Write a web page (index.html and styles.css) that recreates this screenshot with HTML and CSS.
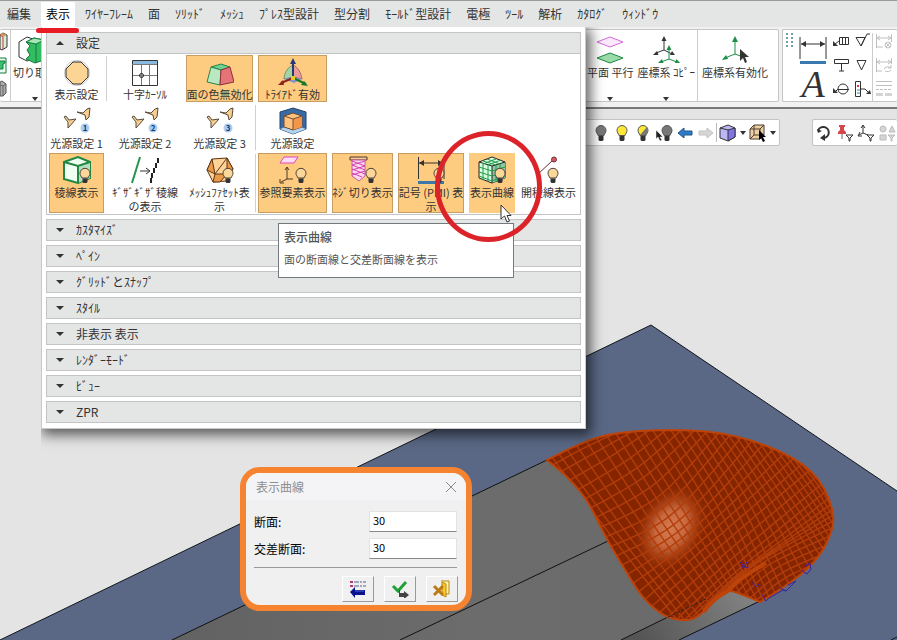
FILE: index.html
```html
<!DOCTYPE html>
<html lang="ja">
<head>
<meta charset="utf-8">
<title>表示曲線</title>
<link rel="stylesheet" href="styles.css">
</head>
<body>
<svg class="defs" aria-hidden="true">
  <symbol id="bulb" viewBox="0 0 12 16">
    <path d="M6 .8a5 5 0 0 0-5 5c0 2 1.300 3 2 4.700h6c.7-1.700 2-2.700 2-4.700a5 5 0 0 0-5-5z" fill="#fbd79a" stroke="#4a4038"/>
    <path d="M3.500 11h5v3.500l-1 1h-3l-1-1z" fill="#333"/>
  </symbol>
  <symbol id="lamp" viewBox="0 0 14 18">
    <path d="M7 1.500a5 5 0 0 0-5 5c0 2 1.500 3 2 5h6c.5-2 2-3 2-5a5 5 0 0 0-5-5z" fill="currentColor" stroke="#555"/>
    <path d="M4.500 12h5v4l-1 1h-3l-1-1z" fill="#333"/>
  </symbol>
  <symbol id="lights" viewBox="0 0 28 28">
    <g fill="#f8cf91" stroke="#564a3b" stroke-linejoin="round">
      <path d="M1 10l2-1 3 4 7-1-8 9 0-6z"/>
      <path d="M14 5l6 1 4-4 3-1-1 9-3 3-1-5z"/>
    </g>
    <circle cx="22" cy="21" r="4.500" fill="#a9cdf5"/>
  </symbol>
  <symbol id="arrow" viewBox="0 0 12 19">
    <path d="M1 1v14l3.500-3 2.500 6 2.500-1-2.500-5.500h4z" fill="#fff" stroke="#333"/>
  </symbol>
</svg>

<div class="app">
  <nav class="menu">
    <a href="#">編集</a>
    <a href="#" class="current">表示</a>
    <a href="#">ﾜｲﾔｰﾌﾚｰﾑ</a>
    <a href="#">面</a>
    <a href="#">ｿﾘｯﾄﾞ</a>
    <a href="#">ﾒｯｼｭ</a>
    <a href="#">ﾌﾟﾚｽ型設計</a>
    <a href="#">型分割</a>
    <a href="#">ﾓｰﾙﾄﾞ型設計</a>
    <a href="#">電極</a>
    <a href="#">ﾂｰﾙ</a>
    <a href="#">解析</a>
    <a href="#">ｶﾀﾛｸﾞ</a>
    <a href="#">ｳｨﾝﾄﾞｳ</a>
  </nav>

  <div class="ribbon">
    <div class="group main-group">
      <div class="edge-icons">
        <svg width="8" height="20" viewBox="0 0 8 20"><path d="M0 3l3-2 4 2v12l-5 3-2-1z" fill="#d9efdc" stroke="#333"/><path d="M0 3l3 2v12" fill="none" stroke="#c33"/><path d="M0 2l3-1 4 2-4 2z" fill="#c99963"/></svg>
        <svg width="8" height="18" viewBox="0 0 8 18"><path d="M0 1h6v15H0" fill="#eafaf0" stroke="#187a3c"/><path d="M0 4h5v2l-2 1v5H0" fill="#38c070" stroke="#187a3c"/></svg>
        <svg width="8" height="18" viewBox="0 0 8 18"><path d="M0 2l2-1 4 3v9l-3 3H0z" fill="#aaa" stroke="#555"/><path d="M0 5l3 1 3-2M3 6v9" fill="none" stroke="#666"/></svg>
      </div>
      <button class="tool cut">
        <svg width="34" height="28" viewBox="0 0 34 28"><path d="M1 6l8-5 6 2-3 6 3 4-3 5 3 5-6 2-8-4z" fill="#fff" stroke="#333"/><path d="M8 6l8-4 10 2v20l-9 3-9-4 4-4-3-5 3-4z" fill="#32bd62" stroke="#187a3c"/><path d="M8 6l8-4 10 2-8 4z" fill="#a5e6b7" stroke="#187a3c"/><path d="M18 8v19" stroke="#187a3c"/></svg>
        <span>切り取り</span><i class="caret"></i>
      </button>
      <div class="main-right">
        <button class="tool">
          <svg width="28" height="28" viewBox="0 0 28 28"><path d="M1 6l13-5 13 5-13 5z" fill="#fbe9fb" stroke="#d46ad8"/><path d="M1 22l13-5 13 5-13 5z" fill="#9adba9" stroke="#1f8a45"/></svg>
          <span>平面 平行</span><i class="caret"></i>
        </button>
        <button class="tool">
          <svg width="28" height="28" viewBox="0 0 28 28" fill="none"><path d="M12 4v10L4 17M12 14l8 4" stroke="#333"/><path d="M12 0l-2.500 5h5zM1 19l4-4 1.500 4zM23 19l-5 0 2-4z" fill="#333"/><path d="M17 13v10l-8 3M17 23l8 3" stroke="#1b8f46"/><path d="M17 9l-2.500 5h5zM6 27l4-4 1.500 4zM28 27l-5 0 1.500-4z" fill="#1b8f46"/></svg>
          <span>座標系 ｺﾋﾟｰ</span><i class="caret"></i>
        </button>
        <button class="tool last">
          <svg width="28" height="28" viewBox="0 0 28 28" fill="none"><path d="M14 4v14L4 22M14 18l8 3" stroke="#1b8f46"/><path d="M14 0l-3 6h6zM1 24l4-5 2 4z" fill="#1b8f46"/><path d="M19 13v12l3-3 2 5 2-1-2-5h4z" fill="#333"/></svg>
          <span>座標系有効化</span>
        </button>
      </div>
    </div>
    <div class="group note-group">
      <svg class="grip" width="8" height="16" viewBox="0 0 8 16" fill="#6e9dae"><path d="M0 0h2v2H0zM5 0h2v2H5zM0 4h2v2H0zM5 4h2v2H5zM0 8h2v2H0zM5 8h2v2H5zM0 12h2v2H0zM5 12h2v2H5z"/></svg>
      <div class="large-notes">
        <button aria-label="寸法"><svg width="28" height="30" viewBox="0 0 28 30"><path d="M1 2v22M27 2v22M2 9h24" fill="none" stroke="#333"/><path d="M2 9l5-3v6zM26 9l-5-3v6z" fill="#333"/><path d="M1 26h26v3H1z" fill="#3a78b0"/></svg></button>
        <button class="letter">A</button>
      </div>
      <div class="small-notes">
        <svg width="17" height="16" viewBox="0 0 17 16" fill="none" stroke="#333"><path d="M6.500 4.500h9v7h-9zM9.500 5v6M12.500 5v6M6 8l-4 3"/><path d="M0 8v5h5z" fill="#333" stroke="none"/></svg>
        <svg width="17" height="16" viewBox="0 0 17 16" fill="none" stroke="#333"><path d="M1 4.500h9L6 13zM6 13l6-12h3"/></svg>
        <svg width="17" height="16" viewBox="0 0 17 16" fill="none" stroke="#333"><path d="M1.500 2.500h14v4h-14zM8.500 7v7M6 14h5"/></svg>
        <svg width="17" height="16" viewBox="0 0 17 16" fill="none" stroke="#333"><path d="M2 3.500h9L6.500 13z"/></svg>
        <svg width="17" height="16" viewBox="0 0 17 16" fill="none" stroke="#333"><circle cx="10" cy="8" r="5"/><path d="M5 8.500h11M5 8l-4 4"/><path d="M0 7v5h5z" fill="#333" stroke="none"/></svg>
        <svg width="17" height="16" viewBox="0 0 17 16" fill="none" stroke="#333"><path d="M.5.500h5v15h-5zM6 8h4l4 4"/><path d="M2 4l2 2M4 4L2 6" stroke="#d33"/><path d="M2 9h3M2 12h3" stroke="#38b"/><path d="M16 13h-5l4-4z" fill="#333" stroke="none"/></svg>
      </div>
      <div class="faded-notes">
        <svg width="16" height="16" viewBox="0 0 16 16" fill="none" stroke="#c0c0c0"><path d="M.5 1v14M15.500 1v8M1 5h14M4 3L1 5l3 2M12 3l3 2-3 2M1 14h6"/><circle cx="12" cy="12" r="3"/><path d="M10 10l4 4M14 10l-4 4"/></svg>
        <svg width="16" height="16" viewBox="0 0 16 16" fill="none" stroke="#c0c0c0"><path d="M.5 1v14M15.500 1v6M1 5h14M4 3L1 5l3 2M12 3l3 2-3 2M1 14h5"/><path d="M8 12a4 3 0 0 1 7-1M15 13a4 3 0 0 1-6 1M15 8v3h-3"/></svg>
        <svg width="16" height="16" viewBox="0 0 16 16" fill="none" stroke="#c0c0c0"><path d="M0 .5h16M0 4.500h16"/><path d="M0 8.500h16" stroke-dasharray="3 1"/><path d="M0 12h7v3H0zM9 12h7v3H9z" fill="#d4d4d4" stroke="none"/></svg>
      </div>
    </div>
  </div>

  <main class="viewport">
    <svg class="scene" viewBox="0 109 897 531" preserveAspectRatio="xMinYMin slice" aria-hidden="true">
      <defs>
        <linearGradient id="grey" x1="0" y1="0" x2="1" y2="0"><stop offset="0" stop-color="#626262"/><stop offset=".5" stop-color="#6c6c6c"/><stop offset="1" stop-color="#6a6a6a"/></linearGradient>
        <linearGradient id="greyLow" gradientUnits="userSpaceOnUse" x1="640" y1="640" x2="740" y2="590"><stop offset="0" stop-color="#555"/><stop offset="1" stop-color="#808080"/></linearGradient>
        <radialGradient id="shine"><stop offset="0" stop-color="#d67a50"/><stop offset=".4" stop-color="#c8693f"/><stop offset=".7" stop-color="#a53e12" stop-opacity=".8"/><stop offset="1" stop-color="#842500" stop-opacity="0"/></radialGradient>
        <clipPath id="outline"><path id="outlinePath"/></clipPath>
      </defs>
      <path d="M0 640L651 325 897 491V640z" fill="#5a6885"/>
      <path d="M0 640L651 325 897 491M891 640l6-3" fill="none" stroke="#10141c"/>
      <path d="M172 640L547 460 700 500 780 591 679 640z" fill="url(#grey)"/>
      <path d="M621 640L705 599 728 588 760 601 679 640z" fill="url(#greyLow)"/>
      <path d="M172 640L547 460M400 640L608 541M621 640L670 616M679 640L762 600" fill="none" stroke="#111"/>
      <path id="skin" fill="#852500"/>
      <ellipse cx="671" cy="528" rx="35" ry="48" transform="rotate(28 671 528)" fill="url(#shine)"/>
      <path id="mesh" clip-path="url(#outline)" fill="none" stroke="#b23d0b" stroke-width="1.400"/>
      <path id="rim" fill="none" stroke="#bd4308" stroke-width="2"/>
      <path d="M728 590Q741 577 766 563M728 591Q710 600 704 612" fill="none" stroke="#bd4308" stroke-width="4"/>
      <path d="M668 617L706 599" stroke="#2b2020" stroke-dasharray="3 2"/>
      <path d="M740 562l4 4 3-4 1 6-6-2 2 4M752 582l4 5 3-3M762 595l4 6 3-3 14-8 3 1 10-10-8 4M801 570l6 4 4-5-1-5-5 2 4-3M780 588l6 3" fill="none" stroke="#3921a2"/>
    </svg>
    <div class="view-tools">
      <div class="toolbar lamps">
        <button aria-label="消灯"><svg width="14" height="18" color="#777"><use href="#lamp"/></svg></button>
        <button aria-label="点灯"><svg width="14" height="18" color="#ffe735"><use href="#lamp"/></svg></button>
        <button aria-label="半点灯"><svg width="14" height="18" color="#ffe735"><use href="#lamp"/><path d="M11 3L4 11h6l2-5z" fill="#777"/></svg></button>
        <button aria-label="選択消灯"><svg width="18" height="18" viewBox="0 0 18 18"><svg x="5" width="14" height="18" viewBox="0 0 14 18" color="#777"><use href="#lamp"/></svg><path d="M1 6v9l2-2 2 4 2-1-2-3h3z" fill="#222" stroke="#fff" stroke-width=".5"/></svg></button>
        <button aria-label="戻る"><svg width="16" height="12" viewBox="0 0 16 12"><path d="M1 6l6-5v3h8v4H7v3z" fill="#2d7cc8" stroke="#205488"/></svg></button>
        <button aria-label="進む"><svg width="16" height="12" viewBox="0 0 16 12"><path d="M15 6L9 1v3H1v4h8v3z" fill="#d6d6d6" stroke="#c2c2c2"/></svg></button>
        <i class="bar"></i>
        <button aria-label="表示方向"><svg width="17" height="18" viewBox="0 0 17 18"><path d="M1 4l8-3 7 3v9l-7 4-8-3z" fill="#bdb6f5" stroke="#333"/><path d="M9 6l7-2v9l-7 4z" fill="#8273e6" stroke="#333"/><path d="M1 4l8 2" stroke="#333"/></svg></button>
        <i class="caret"></i>
        <button aria-label="選択"><svg width="18" height="18" viewBox="0 0 18 18"><path d="M1 5l4-4h10v10l-4 4H1z" fill="#edcfa5" stroke="#4c3c2d"/><path d="M1 5h10v10M11 5l4-4M5 1v10h10M5 11l-4 4" fill="none" stroke="#4c3c2d"/><path d="M10 6v10l2-2 2 4 2-1-2-4h3z" fill="#000"/></svg></button>
        <i class="caret"></i>
      </div>
      <div class="toolbar filters">
        <button aria-label="更新"><svg width="15" height="16" viewBox="0 0 15 16"><path d="M2 6a5.500 5.500 0 1 1 6 7" fill="none" stroke="#333" stroke-width="2"/><path d="M9 9v7l-5-3zM1 4l1 4 4-2z" fill="#333"/></svg></button>
        <button aria-label="ピン"><svg width="18" height="18" viewBox="0 0 18 18"><path d="M3 1h6v2H8v3l2 2v2H2V8l2-2V3H3z" fill="#d6464b"/><path d="M6 10v5" stroke="#666"/><path d="M10 11h7l-3 3v3h-1v-3z" fill="#fff" stroke="#333"/></svg></button>
        <i class="bar"></i>
        <button aria-label="座標"><svg width="18" height="18" viewBox="0 0 18 18"><path d="M6 2v7L2 11M6 9l5 2M4 4l2-3 2 3M3 8l-2 4 4 0" fill="none" stroke="#333"/><path d="M10 11h7l-3 3v3h-1v-3z" fill="#fff" stroke="#333"/></svg></button>
        <i class="bar"></i>
        <button aria-label="形状"><svg width="18" height="18" viewBox="0 0 18 18" fill="#d5d5d5" stroke="#bbb"><circle cx="5" cy="5" r="3"/><path d="M11 8l3-6 3 6zM2 11h6v5H2zM10 11h7l-3 3v3h-1v-3z"/></svg></button>
      </div>
    </div>
  </main>

  <section class="panel">
    <div class="settings">
      <button class="section-title" aria-expanded="true"><i class="caret up"></i>設定</button>
      <div class="choices">
        <button class="choice divided"><svg width="28" height="28" viewBox="0 0 28 28"><circle cx="14" cy="15" r="12.500" fill="none" stroke="#c8c8c8"/><path d="M10 4h8l7 7v8l-7 7h-8l-7-7v-8z" fill="#fcd494" stroke="#333"/></svg><span>表示設定</span></button>
        <button class="choice"><svg width="28" height="28" viewBox="0 0 28 28"><path d="M1.500 2.500h25v25h-25z" fill="#fff" stroke="#333"/><path d="M2 3h24v3H2z" fill="#8ab8df"/><path d="M1 6.500h25M2 17.500h24M10.500 7v20M18.500 7v20" fill="none" stroke="#777"/><circle cx="10.500" cy="17.500" r="2" fill="none" stroke="#222"/></svg><span>十字ｶｰｿﾙ</span></button>
        <button class="choice on"><svg width="28" height="28" viewBox="0 0 28 28" stroke-linejoin="round"><path d="M5 9l10-3 9 3-9 3z" fill="#6fd191" stroke="#29834a"/><path d="M5 9l10 3-1 15-13-3z" fill="#b9e8c1" stroke="#29834a"/><path d="M15 12l9-3 4 15-14 3z" fill="#e47478" stroke="#8f3136"/></svg><span>面の色無効化</span></button>
        <button class="choice on"><svg width="32" height="28" viewBox="0 0 32 28"><path d="M16 7c-5 2-9 8-9 14l9-2z" fill="#a3d5a3" stroke="#788d71"/><path d="M16 7c5 2 8 8 9 14l-9-2z" fill="#e99a99" stroke="#a66a65"/><path d="M7 21l9-2 9 2-8 4z" fill="#8793cd"/><path d="M16 19V3" stroke="#263975" stroke-width="2"/><path d="M16 0l-3 6h6z" fill="#263975"/><path d="M16 20L4 25" stroke="#8c251d" stroke-width="2"/><path d="M1 27l5-5 1 5z" fill="#8c251d"/><path d="M16 20l13 6" stroke="#167827" stroke-width="2"/><path d="M31 28l-7-1 3-4z" fill="#167827"/><path d="M14 18h4v4h-4z" fill="#e1d01f"/></svg><span>ﾄﾗｲｱﾄﾞ有効</span></button>

        <button class="choice first"><svg width="28" height="28"><use href="#lights"/><text x="22" y="24">1</text></svg><span>光源設定 1</span></button>
        <button class="choice"><svg width="28" height="28"><use href="#lights"/><text x="22" y="24">2</text></svg><span>光源設定 2</span></button>
        <button class="choice divided"><svg width="28" height="28"><use href="#lights"/><text x="22" y="24">3</text></svg><span>光源設定 3</span></button>
        <button class="choice"><svg width="28" height="28" viewBox="0 0 28 28"><path d="M1 5l13-4 13 4v17l-13 5-13-5z" fill="#386ba6" stroke="#24436a"/><path d="M1 22l13-5 13 5-13 5z" fill="#b4d3ef"/><path d="M5 9l9-3 9 3v11l-9 3-9-3z" fill="#ffc27d" stroke="#6a4b32"/><path d="M14 12l9-3v11l-9 3z" fill="#f3964a"/><path d="M5 9l9 3 9-3M14 12v11" fill="none" stroke="#735034"/></svg><span>光源設定</span></button>

        <button class="choice on first"><svg width="28" height="28" viewBox="0 0 28 28"><path d="M1 6l14-5 12 5v16l-12 5-14-4z" fill="#effff2" stroke="#248744" stroke-width="2"/><path d="M15 10l12-4v16l-12 5z" fill="#b4dfbf"/><path d="M1 6l14 4 12-4M15 10v17" fill="none" stroke="#248744" stroke-width="2"/><use href="#bulb" x="16" y="11" width="12" height="17"/></svg><span>稜線表示</span></button>
        <button class="choice"><svg width="28" height="28" viewBox="0 0 28 28" fill="none"><path d="M1 27L9 1" stroke="#24944c" stroke-width="2"/><path d="M9 15h9M15 12l4 3-4 3" stroke="#333"/><path d="M27 2v5M25 7v5M23 12v5M21 17v5M20 22v5" stroke="#222" stroke-width="2"/></svg><span>ｷﾞｻﾞｷﾞｻﾞ稜線<br>の表示</span></button>
        <button class="choice divided"><svg width="28" height="28" viewBox="0 0 28 28"><path d="M6 3l15-1 6 11-6 12-14 1-6-12z" fill="#ffd398" stroke="#5c3513" stroke-linejoin="round"/><path d="M6 3l3 15-8-4zM21 2l6 11-6 5zM9 18l12 0-7 8-7 0z" fill="#e99a48" stroke="#5c3513" stroke-linejoin="round"/><path d="M21 2L9 18" stroke="#5c3513"/><use href="#bulb" x="16" y="11" width="12" height="17"/></svg><span>ﾒｯｼｭﾌｧｾｯﾄ表<br>示</span></button>
        <button class="choice on"><svg width="28" height="28" viewBox="0 0 28 28"><path d="M5 1h14l-4 6H1z" fill="#ffdff8" stroke="#dd46bb"/><path d="M8 12v11L2 26M8 23h6M6 14l2-3 2 3M1 23v4h4" fill="none" stroke="#4e3727"/><use href="#bulb" x="16" y="11" width="12" height="17"/></svg><span>参照要素表示</span></button>
        <button class="choice on"><svg width="28" height="28" viewBox="0 0 28 28"><path d="M1 1h17v3H1z" fill="#f5c99b" stroke="#543828"/><path d="M3 4h13v16l-6 5-7-5z" fill="#ffd8ef" stroke="#c65b9d"/><path d="M3 5l13 5M3 9l13 5M3 13l13 5M3 17l10 4M3 9l13-4M3 14l13-4M3 19l13-4" fill="none" stroke="#d242ae"/><use href="#bulb" x="16" y="11" width="12" height="17"/></svg><span>ﾈｼﾞ切り表示</span></button>
        <button class="choice on"><svg width="28" height="28" viewBox="0 0 28 28"><path d="M1.500 1v22M27 1v22M2 7h24" fill="none" stroke="#333"/><path d="M2 7l5-3v6zM26 7l-5-3v6z" fill="#333"/><path d="M1 25h26v3H1z" fill="#3c77a9"/><use href="#bulb" x="16" y="11" width="12" height="17"/></svg><span>記号 (PMI) 表<br>示</span></button>
        <button class="choice on hover"><svg width="28" height="28" viewBox="0 0 28 28"><path d="M1 6l13-5 13 5v16l-13 5-13-5z" fill="#d7ffe2" stroke="#222"/><path d="M14 10l13-4v16l-13 5z" fill="#91c7a2"/><path d="M1 6l13 4 13-4M14 10v17" fill="none" stroke="#222"/><path d="M5 5l13 4v17M9 3l13 5v16M5 8v16M10 9v16M1 11l13 4 13-4M1 16l13 4 13-4M1 20l13 5 13-5M5 8l13-5M10 9l13-5" fill="none" stroke="#24994b"/><use href="#bulb" x="16" y="11" width="12" height="17"/></svg><span>表示曲線</span></button>
        <button class="choice"><svg class="edge-bulb" width="28" height="28" viewBox="0 0 28 28"><path d="M1 20L18 4" stroke="#6b2c35"/><circle cx="19" cy="3.500" r="2.500" fill="#d85764" stroke="#7b303b"/><use href="#bulb" x="12" y="11" width="12" height="17"/></svg><span>開稜線表示</span></button>
      </div>
    </div>
    <button class="section-title closed"><i class="caret"></i>ｶｽﾀﾏｲｽﾞ</button>
    <button class="section-title closed"><i class="caret"></i>ﾍﾟｲﾝ</button>
    <button class="section-title closed"><i class="caret"></i>ｸﾞﾘｯﾄﾞとｽﾅｯﾌﾟ</button>
    <button class="section-title closed"><i class="caret"></i>ｽﾀｲﾙ</button>
    <button class="section-title closed"><i class="caret"></i>非表示 表示</button>
    <button class="section-title closed"><i class="caret"></i>ﾚﾝﾀﾞｰﾓｰﾄﾞ</button>
    <button class="section-title closed"><i class="caret"></i>ﾋﾞｭｰ</button>
    <button class="section-title closed"><i class="caret"></i>ZPR</button>
  </section>

  <div class="underline"></div>
  <div class="tooltip" role="tooltip"><strong>表示曲線</strong><p>面の断面線と交差断面線を表示</p></div>
  <div class="ring"></div>
  <svg class="pointer" width="12" height="19"><use href="#arrow"/></svg>

  <form class="dialog">
    <header><h2>表示曲線</h2><button type="button" class="close" aria-label="閉じる"><svg width="12" height="12" viewBox="0 0 12 12"><path d="M1 1l10 10M11 1L1 11" stroke="#8a8a8a"/></svg></button></header>
    <div class="fields">
      <label for="sections">断面:</label><input id="sections" type="text" value="30">
      <label for="crosses">交差断面:</label><input id="crosses" type="text" value="30">
    </div>
    <footer>
      <button type="button" aria-label="戻す"><svg width="20" height="18" viewBox="0 0 20 18"><path d="M2 2h3M2 6h3" stroke="#b33a73" stroke-width="2"/><path d="M6 2h5M6 6h5M12 2h2M12 6h2M15 2h3M15 6h3" stroke="#555c8c"/><path d="M2 12l5-5v3h10v5H7v3z" fill="#07128c"/><path d="M7 11h9" stroke="#4c68d8"/></svg></button>
      <button type="button" aria-label="適用"><svg width="20" height="18" viewBox="0 0 20 18"><path d="M3 6l5 5 8-9" fill="none" stroke="#20a038" stroke-width="3"/><path d="M10 9v4h4v-2l5 4-5 4v-2h-5v-6z" fill="#444"/></svg></button>
      <button type="button" aria-label="終了"><svg width="20" height="18" viewBox="0 0 20 18"><path d="M9 1h8v13h-4" fill="#fff4ad" stroke="#b88710"/><path d="M10 2l4 2v13l-4-2z" fill="#ffc72e" stroke="#b88710"/><path d="M2 6l9 9M11 6l-9 9" stroke="#bc7a15" stroke-width="3"/></svg></button>
    </footer>
  </form>
</div>
<script src="scene.js"></script>
</body>
</html>
```

FILE: styles.css
```css
* { box-sizing: border-box; }

body {
  margin: 0;
  background: #e4e4e4;
  color: #333;
  font: 12px/16px "Noto Sans CJK JP", sans-serif;
}

button {
  margin: 0;
  padding: 0;
  border: 0;
  background: none;
  color: inherit;
  font: inherit;
}

svg { display: block; flex: none; }
.defs { position: absolute; width: 0; height: 0; }

.app {
  position: relative;
  display: flex;
  flex-direction: column;
  min-height: 100vh;
  overflow: hidden;
}

/* Menu bar */
.menu {
  display: flex;
  gap: 5px;
  height: 27px;
  padding: 1px 2px 0;
  border-top: 1px solid #9a9a9a;
  background: #e4e6e5;
}

.menu a {
  padding: 4px 5px;
  color: #333;
  text-decoration: none;
  white-space: nowrap;
}

.menu .current { background: #fff; color: #000; }

/* Ribbon */
.ribbon {
  display: flex;
  gap: 3px;
  height: 82px;
  padding: 2px 0 5px;
  border-bottom: 2px solid #777;
  background: #f1f1f1;
}

.group {
  display: flex;
  border: 1px solid #c5c5c5;
  border-radius: 2px;
  background: #fff;
}

.main-group { flex: 1; border-left: 0; }
.main-right { display: flex; margin-left: auto; }

.edge-icons {
  display: flex;
  flex-direction: column;
  gap: 5px;
  width: 11px;
  padding-top: 2px;
  border-right: 1px solid #ccc;
}

.tool {
  display: flex;
  flex-direction: column;
  align-items: center;
  gap: 1px;
  padding: 6px 2px 0;
  font-size: 11px;
  line-height: 14px;
  white-space: nowrap;
}

.tool .caret { margin-top: 17px; }
.tool.last { padding: 6px 10px 0 4px; border-left: 1px solid #ccc; }

.caret {
  width: 0;
  height: 0;
  border: 3px solid transparent;
  border-top: 4px solid #333;
  border-bottom: 0;
}

.caret.up { border-top: 0; border-bottom: 4px solid #333; }

.note-group {
  width: 115px;
  padding: 3px 3px 0;
  border-right: 0;
}

.large-notes { display: flex; flex-direction: column; padding: 0 6px 0 5px; }
.large-notes svg { margin-top: 2px; }
.letter { height: 38px; font: italic 38px/38px "Liberation Serif", serif; }

.small-notes {
  display: grid;
  grid-template-columns: 17px 17px;
  align-content: start;
  gap: 8px 5px;
}

.faded-notes {
  display: flex;
  flex-direction: column;
  gap: 8px;
  padding-left: 3px;
  border-left: 1px solid #ccc;
}

/* 3D view */
.viewport { position: relative; display: flex; flex: 1; }
.scene { position: absolute; inset: 0; width: 100%; height: 100%; }

.view-tools {
  position: relative;
  display: flex;
  flex: 1;
  align-items: flex-start;
  justify-content: flex-end;
  gap: 32px;
  padding-top: 10px;
}

.toolbar {
  display: flex;
  align-items: center;
  height: 27px;
  border: 1px solid #c3c3c3;
  border-radius: 2px;
  background: #fff;
}

.lamps { padding: 0 2px 0 12px; }
.toolbar button { display: grid; place-items: center; width: 21px; height: 24px; }
.toolbar .caret { margin: 0 1px 0 2px; }
.bar { width: 1px; height: 19px; background: #bbb; }
.filters { width: 85px; border-right: 0; overflow: hidden; }
.filters button { flex: none; }

/* Drop-down panel */
.panel {
  position: absolute;
  top: 27px;
  left: 41px;
  display: flex;
  flex-direction: column;
  gap: 4px;
  padding: 5px 4px;
  border: 1px solid #c9c9c9;
  border-top: 0;
  background: #fff;
  box-shadow: 3px 4px 12px 2px rgba(0, 0, 0, .6);
  clip-path: inset(0 -24px -24px 0);
}

.settings { border: 1px solid #c4c4c4; }

.section-title {
  display: flex;
  align-items: center;
  gap: 12px;
  width: 100%;
  height: 21px;
  padding-left: 9px;
  border-bottom: 1px solid #c4c4c4;
  background: #e4e6e5;
  text-align: left;
}

.section-title.closed { height: 22px; border: 1px solid #c4c4c4; }
.section-title .caret { border-left-width: 4px; border-right-width: 4px; }

.choices {
  display: grid;
  grid-template-columns: 55px 72px 67px 69px 61px 66px 46px 57px;
  grid-template-rows: 47px 47px 60px;
  gap: 2px 5px;
  padding: 1px 3px 1px 2px;
}

.choice {
  position: relative;
  display: flex;
  flex-direction: column;
  align-items: center;
  gap: 1px;
  padding-top: 2px;
  border: 1px solid transparent;
  font-size: 11px;
  line-height: 14px;
  text-align: center;
  white-space: nowrap;
}

.choice.first { grid-column: 1; }
.choice.on { border-color: #c79d62; background: #fecc80; }
.choice.hover { border-color: #fecc80; }
.choice text { fill: #173a6b; font-size: 8px; font-weight: 700; text-anchor: middle; }

.choice.divided::after {
  position: absolute;
  top: 0;
  right: -4px;
  bottom: 0;
  width: 1px;
  background: #d0d0d0;
  content: "";
}

/* Annotations */
.underline {
  position: absolute;
  top: 28px;
  left: 36px;
  width: 43px;
  height: 5px;
  border-radius: 3px;
  background: #e81c24;
}

.ring {
  position: absolute;
  top: 131px;
  left: 435px;
  width: 107px;
  height: 111px;
  border: 5px solid #db2329;
  border-radius: 50%;
}

.pointer { position: absolute; top: 204px; left: 500px; }

.tooltip {
  position: absolute;
  top: 223px;
  left: 278px;
  width: 236px;
  padding: 5px;
  border: 1px solid #74797f;
  background: #fff;
  color: #555;
}

.tooltip strong { font-weight: 500; }
.tooltip p { margin: 6px 0 4px; font-size: 11px; line-height: 17px; }

/* Parameter dialog */
.dialog {
  position: absolute;
  top: 467px;
  left: 240px;
  width: 232px;
  border: 6px solid #f5832f;
  border-radius: 20px;
  background: #f0f0f0;
  color: #000;
  overflow: hidden;
}

.dialog header {
  display: flex;
  align-items: center;
  justify-content: space-between;
  height: 27px;
  padding: 0 9px 0 10px;
  background: #f4f4f6;
}

.dialog h2 { margin: 0; color: #8e8e8e; font-size: 12px; font-weight: 400; }

.fields {
  display: grid;
  grid-template-columns: 1fr 88px;
  gap: 6px;
  align-items: center;
  margin: 0 9px 0 8px;
  padding: 11px 0 8px;
  border-bottom: 1px solid #999;
}

.fields input {
  width: 100%;
  height: 21px;
  padding: 0 3px 3px;
  border: 1px solid #e3e3e3;
  border-bottom-color: #888;
  background: #fff;
  color: #000;
  font: 11px/16px "Noto Sans CJK JP", sans-serif;
}

.dialog footer {
  display: flex;
  justify-content: flex-end;
  gap: 10px;
  padding: 8px 8px 3px;
}

.dialog footer button {
  display: grid;
  place-items: center;
  width: 32px;
  height: 26px;
  border: 1px solid #fff;
  border-right-color: #999;
  border-bottom-color: #999;
}
```

FILE: scene.js
```js
// Outline of the curved surface, clockwise from its left tip.
const outline = [
  [[547, 460], [578, 445], [613, 434], [673, 430], [730, 435], [783, 453], [817, 478], [833, 514], [827, 542], [810, 566], [785, 586], [760, 602]],
  [[760, 602], [743, 595], [728, 591], [717, 599], [703, 612], [692, 619], [680, 620]],
  [[680, 620], [664, 615], [643, 597], [621, 563], [606, 537], [587, 501], [567, 477], [547, 460]]
];

// Guide curves of the two section families; the lines between are interpolated.
const rising = [
  [[547, 460], [580, 443], [615, 430]],
  [[585, 501], [640, 468], [690, 424]],
  [[612, 550], [676, 515], [752, 430]],
  [[640, 597], [708, 540], [805, 455]],
  [[680, 622], [738, 568], [838, 488]],
  [[728, 592], [766, 560], [842, 522]],
  [[756, 606], [790, 580], [836, 560]]
];
const falling = [
  [[547, 460], [606, 537], [675, 624]],
  [[610, 428], [668, 520], [730, 612]],
  [[680, 424], [728, 502], [776, 604]],
  [[740, 430], [784, 496], [826, 562]],
  [[795, 452], [822, 486], [842, 520]]
];

function along(points, t) {
  const last = points.length - 1;
  const i = Math.min(Math.floor(t * last), last - 1);
  const f = t * last - i;
  const p = [-1, 0, 1, 2].map(k => points[Math.max(0, Math.min(last, i + k))]);
  return [0, 1].map(a => 0.5 * (2 * p[1][a] + (p[2][a] - p[0][a]) * f
    + (2 * p[0][a] - 5 * p[1][a] + 4 * p[2][a] - p[3][a]) * f * f
    + (3 * p[1][a] - p[0][a] - 3 * p[2][a] + p[3][a]) * f * f * f));
}

function trace(points) {
  const out = [];
  for (let i = 0; i <= 40; i++) out.push(along(points, i / 40).map(n => n.toFixed(1)).join(" "));
  return out.join("L");
}

function family(guides, count) {
  let d = "";
  for (let i = 1; i < count; i++) {
    d += "M" + trace([0, 1, 2].map(k => along(guides.map(g => g[k]), i / count)));
  }
  return d;
}

const edge = "M" + outline.map(trace).join("L") + "Z";
for (const id of ["skin", "rim", "outlinePath"]) document.getElementById(id).setAttribute("d", edge);
document.getElementById("mesh").setAttribute("d", family(rising, 31) + family(falling, 31));
```
